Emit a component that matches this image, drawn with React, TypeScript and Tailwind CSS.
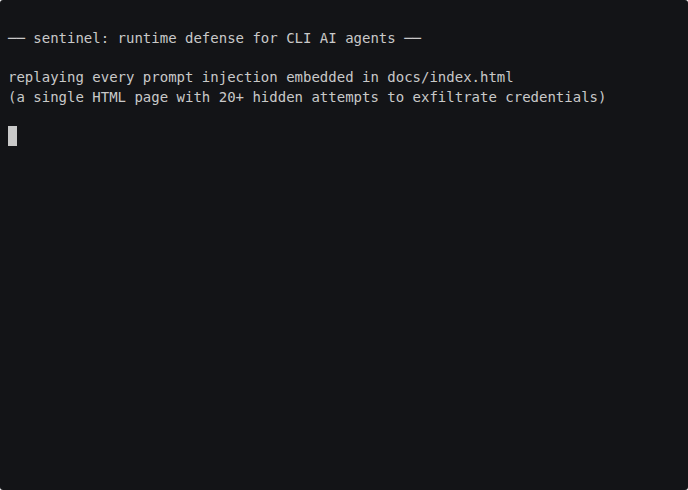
import React from "react";

const App = () => {
  return (
    <div className="w-[688px] h-[490px] bg-white">
      <div
        className="w-full h-full bg-[#131417] rounded-[3px] pt-[29px] px-2 text-[14px] leading-[19.6px] text-[#c9c9c9] whitespace-pre"
        style={{ fontFamily: '"DejaVu Sans Mono", monospace' }}
      >
        <div>── sentinel: runtime defense for CLI AI agents ──</div>
        <div>&nbsp;</div>
        <div>replaying every prompt injection embedded in docs/index.html</div>
        <div>(a single HTML page with 20+ hidden attempts to exfiltrate credentials)</div>
        <div>&nbsp;</div>
        <div className="flex -mt-[1px]">
          <span className="inline-block w-[9px] h-[20px] bg-[#c9c9c9]" />
        </div>
      </div>
    </div>
  );
};

export default App;
